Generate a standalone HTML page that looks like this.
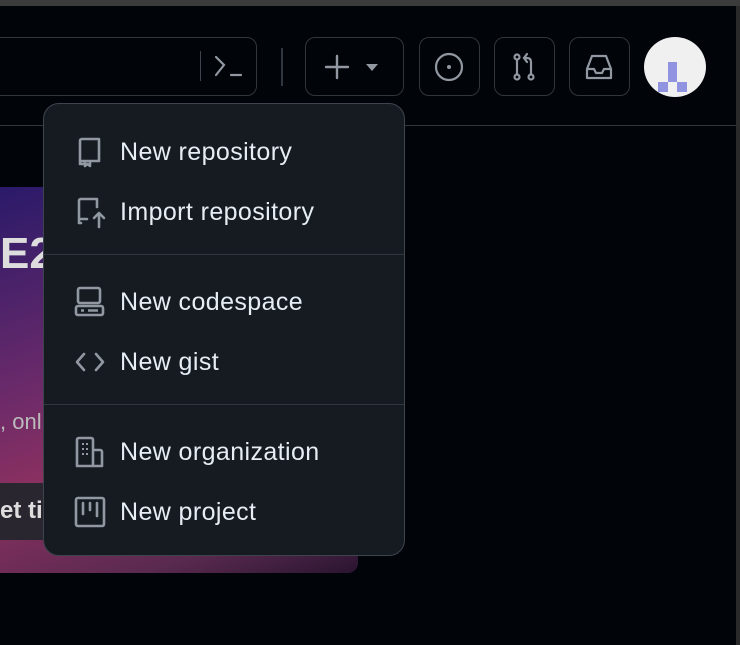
<!DOCTYPE html>
<html><head><style>
*{margin:0;padding:0;box-sizing:border-box}
body{width:740px;height:645px;background:#010409;position:relative;overflow:hidden;font-family:"Liberation Sans",sans-serif}
.top{position:absolute;left:0;top:0;width:740px;height:6px;background:#3b3b3b}
.sb{position:absolute;right:0;top:6px;width:4px;height:639px;background:#2a2a2a}
.hline{position:absolute;left:0;top:125px;width:737px;height:1px;background:#30363d}
.btn{position:absolute;top:37px;height:59px;border:1px solid #30363d;border-radius:10px}
.banner{position:absolute;left:0;top:187px;width:358px;height:386px;border-radius:0 0 10px 0;background:linear-gradient(160deg,#2a1a6a 0%,#6a2a6a 40%,#8a3060 60%,#5a2a50 85%,#2a1530 100%)}
.menu{position:absolute;left:43px;top:103px;width:362px;height:453px;background:#161b22;border:1px solid #3d444d;border-radius:16px}
.item{position:absolute;left:76px;font-size:25px;letter-spacing:0.4px;color:#e6edf3}
.sep{position:absolute;left:0;width:360px;height:1px;background:#30363d}
svg{position:absolute}
</style></head><body>
<div class="top"></div><div class="sb"></div>
<div class="banner">
<div style="position:absolute;left:0;top:42px;font-size:44px;font-weight:bold;color:#ddd">E2</div>
<div style="position:absolute;left:0;top:222px;font-size:22px;color:#bbb">, onl</div>
<div style="position:absolute;left:0;top:296px;width:80px;height:57px;background:#2a2630;color:#ddd;font-weight:bold;font-size:24px;padding:14px 0 0 0">et ti</div>
</div>
<div class="hline"></div>
<div class="btn" style="left:-20px;width:277px"></div>
<div style="position:absolute;left:200px;top:51px;width:1px;height:30px;background:#3d444d"></div>
<svg style="left:212px;top:54px" width="32" height="26" viewBox="0 0 32 26" fill="none" stroke="#9198a1" stroke-width="2.2" stroke-linecap="round"><path d="M4 3l8 8-8 10M19 21h10"/></svg>
<div style="position:absolute;left:281px;top:48px;width:2px;height:38px;background:#30363d"></div>
<div class="btn" style="left:305px;width:99px"></div>
<svg style="left:322px;top:54px" width="60" height="26" fill="none" stroke="#9198a1" stroke-width="2.4" stroke-linecap="round"><path d="M15 2v22M4 13h22"/><path d="M44 10h12l-6 7z" fill="#9198a1" stroke="none"/></svg>
<div class="btn" style="left:419px;width:61px"></div>
<svg style="left:433px;top:51px" width="32" height="32" fill="none" stroke="#9198a1" stroke-width="2.2"><circle cx="16" cy="16" r="13"/><circle cx="16" cy="16" r="2" fill="#9198a1" stroke="none"/></svg>
<div class="btn" style="left:494px;width:61px"></div>
<svg style="left:508px;top:51px" width="32" height="32" fill="none" stroke="#9198a1" stroke-width="2.2" stroke-linecap="round"><circle cx="9" cy="6" r="2.5"/><circle cx="9" cy="26" r="2.5"/><circle cx="23" cy="26" r="2.5"/><path d="M9 9v14M23 23V11q0-4-4-4h-3M19 3l-3 4 3 4"/></svg>
<div class="btn" style="left:569px;width:61px"></div>
<svg style="left:583px;top:51px" width="32" height="32" fill="none" stroke="#9198a1" stroke-width="2.2" stroke-linejoin="round"><path d="M4 18l5-13h14l5 13v9H4zM4 18h7l2 4h6l2-4h7"/></svg>
<div style="position:absolute;left:644px;top:37px;width:62px;height:60px;border-radius:50%;background:#f0f0f0;overflow:hidden">
<div style="position:absolute;left:24px;top:25px;width:9px;height:20px;background:#8f93e0"></div>
<div style="position:absolute;left:14px;top:45px;width:10px;height:10px;background:#8f93e0"></div>
<div style="position:absolute;left:33px;top:45px;width:10px;height:10px;background:#8f93e0"></div>
</div>
<div class="menu">
<svg style="left:31px;top:32px" width="30" height="32" fill="none" stroke="#9198a1" stroke-width="2.6" stroke-linejoin="round"><path d="M9 28H5V5q0-2 2-2h17v22H7q-2 0-2 2M19 25h5M10 25v5l2.5-2 2.5 2v-5z"/></svg>
<div class="item" style="top:34px">New repository</div>
<svg style="left:30px;top:92px" width="32" height="34" fill="none" stroke="#9198a1" stroke-width="2.6" stroke-linejoin="round" stroke-linecap="round"><path d="M7 27h-2V5q0-2 2-2h16v8M5 23h8M25 31V18M20 22l5-5 5 5"/></svg>
<div class="item" style="top:94px">Import repository</div>
<div class="sep" style="top:150px"></div>
<svg style="left:30px;top:182px" width="32" height="32" fill="none" stroke="#9198a1" stroke-width="2.6" stroke-linejoin="round"><rect x="4" y="2" width="22" height="15" rx="2"/><rect x="2" y="20" width="27" height="9" rx="2"/><path d="M7 24.5h3M14 24.5h10"/></svg>
<div class="item" style="top:184px">New codespace</div>
<svg style="left:30px;top:242px" width="32" height="32" fill="none" stroke="#9198a1" stroke-width="2.6" stroke-linecap="round" stroke-linejoin="round"><path d="M10 8l-7 8 7 8M22 8l7 8-7 8"/></svg>
<div class="item" style="top:244px">New gist</div>
<div class="sep" style="top:300px"></div>
<svg style="left:30px;top:332px" width="32" height="32" fill="none" stroke="#9198a1" stroke-width="2.6" stroke-linejoin="round"><path d="M3 30V4q0-2 2-2h12q2 0 2 2v26zM19 14h7q2 0 2 2v14h-9M3 30h25"/><path d="M8 8h2M12 8h2M8 13h2M12 13h2M8 18h2M12 18h2" stroke-width="2"/></svg>
<div class="item" style="top:334px">New organization</div>
<svg style="left:30px;top:392px" width="32" height="32" fill="none" stroke="#9198a1" stroke-width="2.6" stroke-linecap="round"><rect x="2" y="2" width="28" height="28" rx="2"/><path d="M9 7v11M16 7v7M23 7v13"/></svg>
<div class="item" style="top:394px">New project</div>
</div>
</body></html>
